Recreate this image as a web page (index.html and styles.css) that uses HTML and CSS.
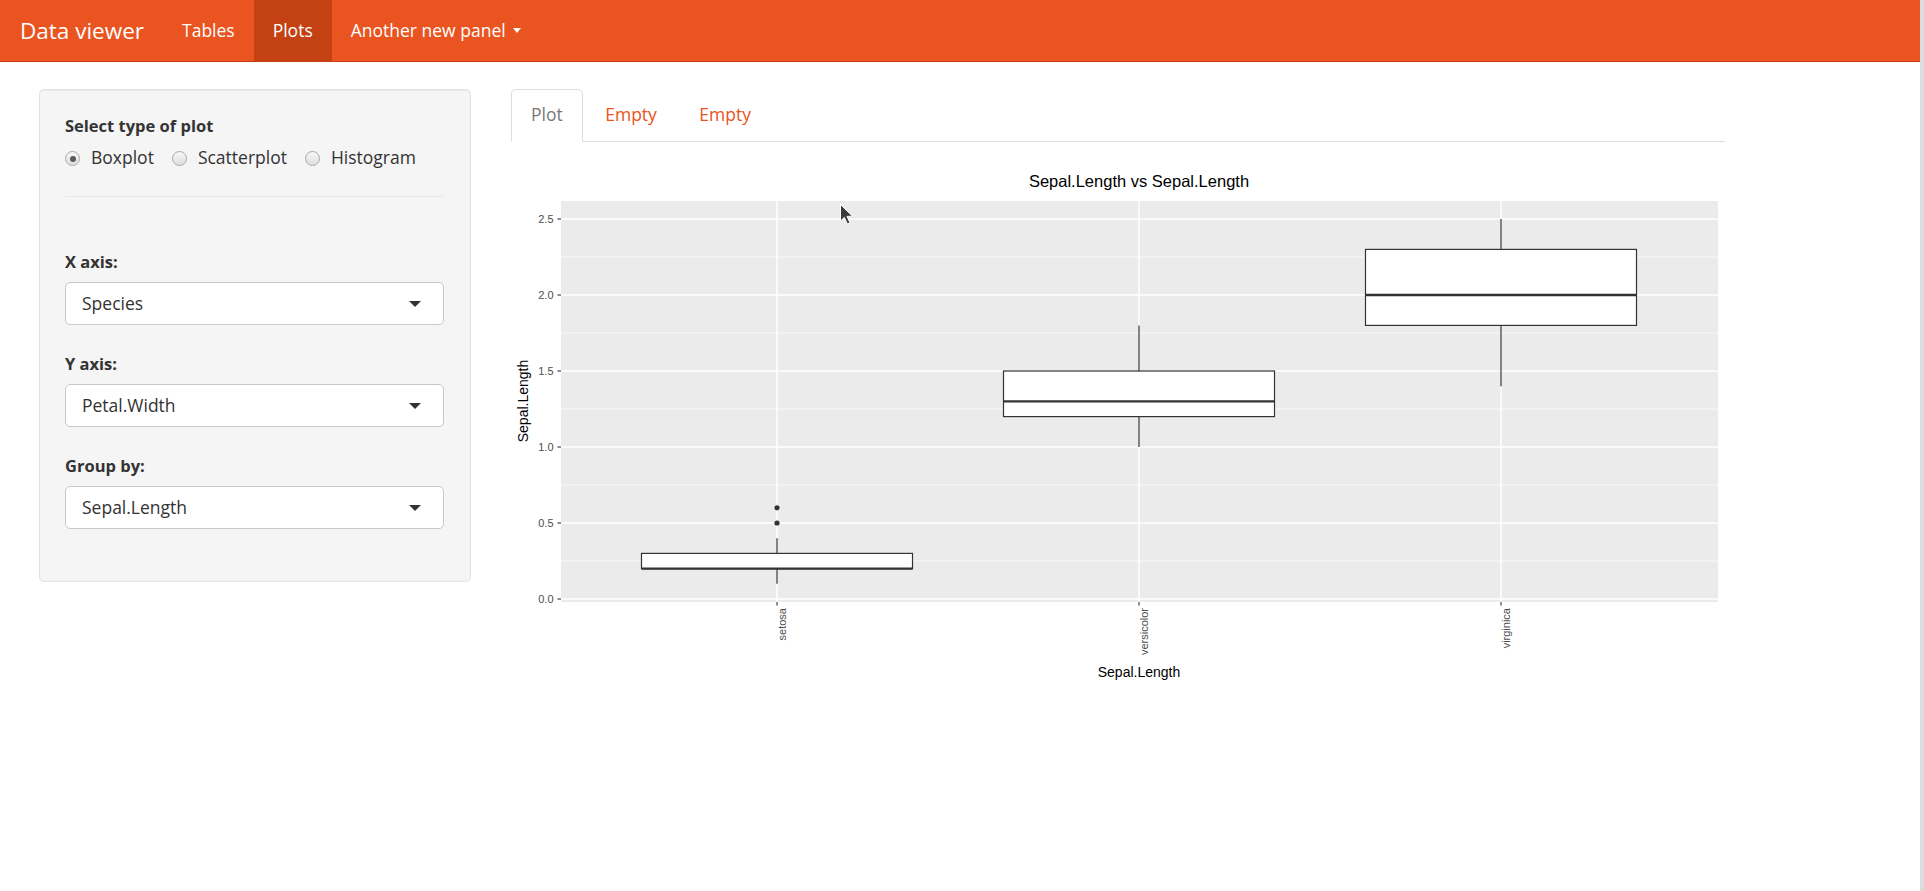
FILE: index.html
```html
<!DOCTYPE html>
<html lang="en">
<head>
<meta charset="utf-8">
<title>Data viewer</title>
<link rel="stylesheet" href="styles.css">
</head>
<body>
<nav class="navbar">
  <a class="brand" href="#">Data viewer</a>
  <ul class="nav">
    <li><a href="#">Tables</a></li>
    <li class="active"><a href="#">Plots</a></li>
    <li><a href="#">Another new panel <span class="caret"></span></a></li>
  </ul>
</nav>

<div class="page">
  <aside class="well">
    <div class="group">
      <div class="label">Select type of plot</div>
      <div class="radios">
        <label class="radio"><input type="radio" name="ptype" checked><span>Boxplot</span></label>
        <label class="radio"><input type="radio" name="ptype"><span>Scatterplot</span></label>
        <label class="radio"><input type="radio" name="ptype"><span>Histogram</span></label>
      </div>
    </div>
    <hr class="sep">
    <div class="group field">
      <div class="label">X axis:</div>
      <div class="select"><span>Species</span><span class="sel-caret"></span></div>
    </div>
    <div class="group field">
      <div class="label">Y axis:</div>
      <div class="select"><span>Petal.Width</span><span class="sel-caret"></span></div>
    </div>
    <div class="group field">
      <div class="label">Group by:</div>
      <div class="select"><span>Sepal.Length</span><span class="sel-caret"></span></div>
    </div>
  </aside>

  <main class="main">
    <ul class="tabs">
      <li class="tab active"><a href="#">Plot</a></li>
      <li class="tab"><a href="#">Empty</a></li>
      <li class="tab"><a href="#">Empty</a></li>
    </ul>
    <div class="tab-content">
      <svg class="plot" width="1214" height="560" viewBox="511 141 1214 560" xmlns="http://www.w3.org/2000/svg">
        <text x="1139" y="185.5" text-anchor="middle" font-size="16.5" fill="#000">Sepal.Length vs Sepal.Length</text>
        <rect x="561" y="200" width="1157" height="401" fill="#EBEBEB"/>
        <g stroke="#FFFFFF" stroke-width="0.7">
          <line x1="561" x2="1718" y1="560" y2="560"/>
          <line x1="561" x2="1718" y1="484" y2="484"/>
          <line x1="561" x2="1718" y1="408" y2="408"/>
          <line x1="561" x2="1718" y1="332" y2="332"/>
          <line x1="561" x2="1718" y1="256" y2="256"/>
        </g>
        <g stroke="#FFFFFF" stroke-width="1.4">
          <line x1="561" x2="1718" y1="598" y2="598"/>
          <line x1="561" x2="1718" y1="522" y2="522"/>
          <line x1="561" x2="1718" y1="446" y2="446"/>
          <line x1="561" x2="1718" y1="370" y2="370"/>
          <line x1="561" x2="1718" y1="294" y2="294"/>
          <line x1="561" x2="1718" y1="218" y2="218"/>
          <line x1="777" x2="777" y1="200" y2="601"/>
          <line x1="1139" x2="1139" y1="200" y2="601"/>
          <line x1="1501" x2="1501" y1="200" y2="601"/>
        </g>
        <g stroke="#333333" stroke-width="1.2" fill="#FFFFFF">
          <line x1="777" x2="777" y1="552.4" y2="537.2"/>
          <line x1="777" x2="777" y1="567.6" y2="582.8"/>
          <rect x="641.5" y="552.4" width="271" height="15.2"/>
          <line x1="1139" x2="1139" y1="370" y2="324.4"/>
          <line x1="1139" x2="1139" y1="415.6" y2="446"/>
          <rect x="1003.5" y="370" width="271" height="45.6"/>
          <line x1="1501" x2="1501" y1="248.4" y2="218"/>
          <line x1="1501" x2="1501" y1="324.4" y2="385.2"/>
          <rect x="1365.5" y="248.4" width="271" height="76"/>
        </g>
        <g stroke="#333333" stroke-width="2.4">
          <line x1="641.5" x2="912.5" y1="567.6" y2="567.6"/>
          <line x1="1003.5" x2="1274.5" y1="400.4" y2="400.4"/>
          <line x1="1365.5" x2="1636.5" y1="294" y2="294"/>
        </g>
        <g fill="#333333">
          <circle cx="777" cy="522" r="2.6"/>
          <circle cx="777" cy="506.8" r="2.6"/>
        </g>
        <g stroke="#333333" stroke-width="1.1">
          <line x1="557.5" x2="561" y1="598" y2="598"/>
          <line x1="557.5" x2="561" y1="522" y2="522"/>
          <line x1="557.5" x2="561" y1="446" y2="446"/>
          <line x1="557.5" x2="561" y1="370" y2="370"/>
          <line x1="557.5" x2="561" y1="294" y2="294"/>
          <line x1="557.5" x2="561" y1="218" y2="218"/>
          <line x1="777" x2="777" y1="601" y2="604.5"/>
          <line x1="1139" x2="1139" y1="601" y2="604.5"/>
          <line x1="1501" x2="1501" y1="601" y2="604.5"/>
        </g>
        <g fill="#4D4D4D" font-size="11" text-anchor="end">
          <text x="553.5" y="602">0.0</text>
          <text x="553.5" y="526">0.5</text>
          <text x="553.5" y="450">1.0</text>
          <text x="553.5" y="374">1.5</text>
          <text x="553.5" y="298">2.0</text>
          <text x="553.5" y="222">2.5</text>
          <text transform="translate(785.5 607) rotate(-90)">setosa</text>
          <text transform="translate(1147.5 607) rotate(-90)">versicolor</text>
          <text transform="translate(1509.5 607) rotate(-90)">virginica</text>
        </g>
        <text x="1139" y="676" text-anchor="middle" font-size="14" fill="#000">Sepal.Length</text>
        <text transform="translate(528 400) rotate(-90)" text-anchor="middle" font-size="14" fill="#000">Sepal.Length</text>
        <path d="M840.5 203.5 L840.5 220 L844.3 216.4 L847.4 223 L850 221.8 L847 215.4 L852.5 215.2 Z" fill="#3a3a3a" stroke="#FFFFFF" stroke-width="1"/>
      </svg>
    </div>
  </main>
</div>
<div class="scrollbar"></div>
</body>
</html>
```

FILE: styles.css
```css
* { box-sizing: border-box; }

html, body {
  margin: 0;
  padding: 0;
  background: #ffffff;
}

body {
  font-family: "Open Sans", "Noto Sans", "DejaVu Sans", sans-serif;
  font-size: 17.5px;
  line-height: 25px;
  color: #333333;
}

a { text-decoration: none; }

/* Navbar */
.navbar {
  display: flex;
  align-items: stretch;
  height: 62px;
  background: #E95420;
  border-bottom: 1px solid #c34113;
}

.brand {
  display: flex;
  align-items: center;
  padding: 0 19px 0 20px;
  font-size: 22.5px;
  color: #ffffff;
}

.nav {
  display: flex;
  list-style: none;
  margin: 0;
  padding: 0;
}

.nav li a {
  display: flex;
  align-items: center;
  height: 61px;
  padding: 0 19px;
  color: #ffffff;
}

.nav li.active a {
  background: #c34113;
}

.caret {
  display: inline-block;
  width: 0;
  height: 0;
  margin-left: 7px;
  border-top: 5px solid #ffffff;
  border-left: 4.5px solid transparent;
  border-right: 4.5px solid transparent;
}

/* Page layout */
.page {
  display: flex;
  align-items: flex-start;
  gap: 40px;
  padding: 27px 0 0 39px;
}

/* Sidebar well */
.well {
  width: 432px;
  flex: 0 0 432px;
  padding: 23px 26px 52px 25px;
  background: #f5f5f5;
  border: 1px solid #e3e3e3;
  border-radius: 5px;
  box-shadow: inset 0 1px 1px rgba(0, 0, 0, 0.05);
}

.label {
  font-size: 16.5px;
  font-weight: 700;
  color: #333333;
  margin-bottom: 7px;
}

.radios {
  display: flex;
  align-items: center;
}

.radio {
  display: flex;
  align-items: center;
  margin-right: 18px;
  cursor: pointer;
}

.radio input {
  appearance: none;
  -webkit-appearance: none;
  width: 15px;
  height: 15px;
  margin: 2px 11px 0 0;
  border: 1px solid #a9a9a9;
  border-radius: 50%;
  background: linear-gradient(#f7f7f7, #dedede);
  position: relative;
}

.radio input:checked::after {
  content: "";
  position: absolute;
  left: 3.5px;
  top: 3.5px;
  width: 6px;
  height: 6px;
  border-radius: 50%;
  background: #5a5a5a;
}

.sep {
  margin: 26px 0 52px;
  border: 0;
  border-top: 1px solid #e8e8e8;
  height: 0;
}

.field + .field {
  margin-top: 26px;
}

.field .label {
  margin-bottom: 8px;
}

.select {
  display: flex;
  align-items: center;
  justify-content: space-between;
  height: 43px;
  padding: 0 22px 0 16px;
  background: #ffffff;
  border: 1px solid #c8c8c8;
  border-radius: 5px;
  color: #333333;
}

.sel-caret {
  width: 0;
  height: 0;
  border-top: 6px solid #333333;
  border-left: 6px solid transparent;
  border-right: 6px solid transparent;
}

/* Main panel */
.main {
  width: 1214px;
  flex: 0 0 1214px;
}

.tabs {
  display: flex;
  list-style: none;
  margin: 0;
  padding: 0;
  border-bottom: 1px solid #dddddd;
}

.tab {
  margin-right: 2.5px;
  margin-bottom: -1px;
}

.tab a {
  display: block;
  padding: 12px 19px 14px 19px;
  border: 1px solid transparent;
  border-radius: 5px 5px 0 0;
  color: #E95420;
}

.tab.active a {
  color: #777777;
  background: #ffffff;
  border-color: #dddddd #dddddd transparent #dddddd;
}

.tab-content {
  display: block;
}

.plot {
  display: block;
  font-family: "Liberation Sans", Arial, sans-serif;
}

.scrollbar {
  position: fixed;
  top: 0;
  right: 0;
  bottom: 0;
  width: 4px;
  background: #dcdce0;
}
```
